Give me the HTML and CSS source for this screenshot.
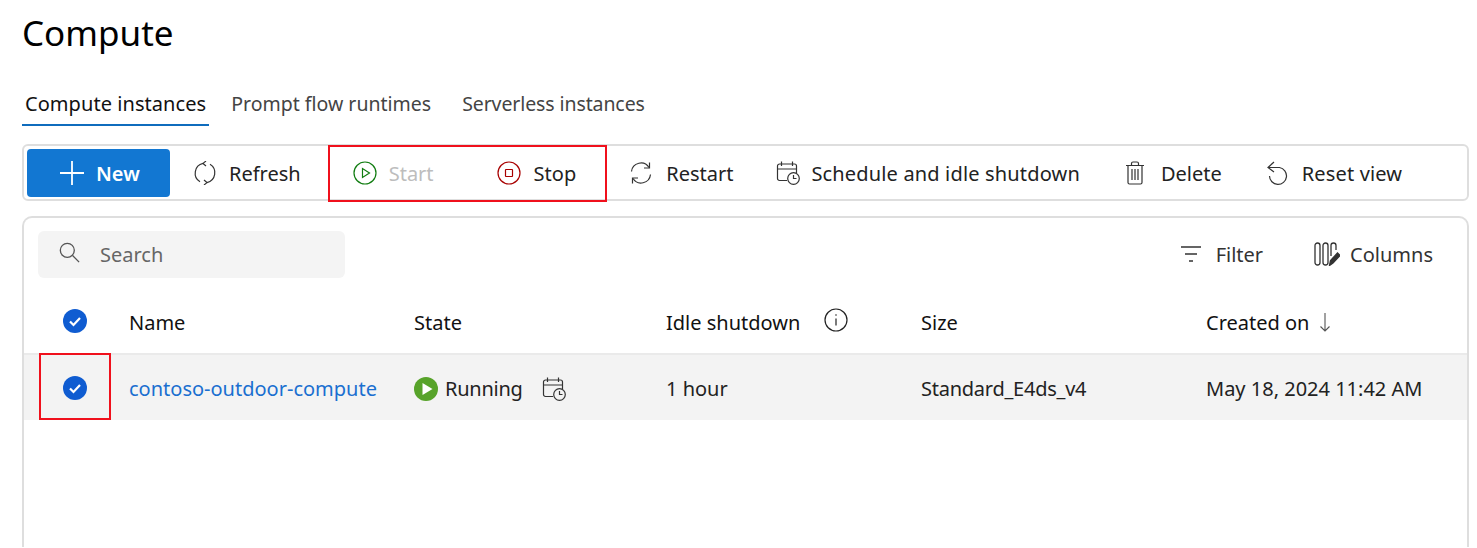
FILE: index.html
```html
<!DOCTYPE html>
<html lang="en">
<head>
<meta charset="utf-8">
<title>Compute</title>
<link rel="stylesheet" href="styles.css">
</head>
<body>
<main class="page">
  <h1 class="title">Compute</h1>
  <nav class="tabs">
    <a class="tab tab-active">Compute instances</a>
    <a class="tab tab-prompt">Prompt flow runtimes</a>
    <a class="tab tab-serverless">Serverless instances</a>
  </nav>

  <div class="toolbar">
    <button class="new-btn">
      <svg class="ico-plus" viewBox="0 0 24 24"><path d="M12 0v24M0 12h24" stroke="#fff" stroke-width="1.8" fill="none"/></svg>
      <span>New</span>
    </button>
    <div class="tool t-refresh">
      <svg class="ico" viewBox="0 0 24 24" fill="none" stroke="#333" stroke-width="1.2"><path d="M10 2.400A10 10 0 0 0 7 20.700"/><path d="M14 21.600A10 10 0 0 0 17 3.300"/><path d="M13 0 10 2.400l3 2.600M11 24l3-2.400-3-2.600"/></svg>
      <span>Refresh</span>
    </div>
    <div class="tool t-start">
      <svg class="ico" viewBox="0 0 24 24" fill="none" stroke="#107c10" stroke-width="1.2"><circle cx="12" cy="12" r="11"/><path d="M9.500 7.500v9l7-4.500z"/></svg>
      <span class="disabled">Start</span>
    </div>
    <div class="tool t-stop">
      <svg class="ico" viewBox="0 0 24 24" fill="none" stroke="#a80000" stroke-width="1.2"><circle cx="12" cy="12" r="11"/><rect x="8.500" y="8.500" width="7" height="7" rx=".5"/></svg>
      <span>Stop</span>
    </div>
    <div class="tool t-restart">
      <svg class="ico" viewBox="0 0 24 24" fill="none" stroke="#333" stroke-width="1.2"><path d="M2.500 10.500A9.500 9.500 0 0 1 20 6.500"/><path d="M21.500 13.500A9.500 9.500 0 0 1 4 17.500"/><path d="M20.500 1.500v5.500h-5.500M3.500 22.500V17h5.500"/></svg>
      <span>Restart</span>
    </div>
    <div class="tool t-schedule">
      <svg class="ico" viewBox="0 0 24 24" fill="none" stroke="#333" stroke-width="1.2"><path d="M11 19.500H3.500a2 2 0 0 1-2-2V5a2 2 0 0 1 2-2h15a2 2 0 0 1 2 2v7M1.500 8h19M5.500 .5v4.500M16.500 .5v4.500"/><circle cx="17.500" cy="17.500" r="5.800"/><path d="M17.500 14v3.500h3"/></svg>
      <span class="wide">Schedule and idle shutdown</span>
    </div>
    <div class="tool t-delete">
      <svg class="ico ico-trash" viewBox="0 0 20 24" fill="none" stroke="#333" stroke-width="1.2"><path d="M1 4.500h18M6.500 4.500V2.500a1.500 1.500 0 0 1 1.500-1.500h4a1.500 1.500 0 0 1 1.500 1.500v2M3 4.500v17a1.500 1.500 0 0 0 1.500 1.500h11a1.500 1.500 0 0 0 1.500-1.500v-17M7 8v11M10 8v11M13 8v11"/></svg>
      <span>Delete</span>
    </div>
    <div class="tool t-reset">
      <svg class="ico" viewBox="0 0 24 24" fill="none" stroke="#333" stroke-width="1.2"><path d="M3 6.500h10.500a8.500 8.500 0 1 1-10 8.500"/><path d="M8 1 2 6.500l6 4.500"/></svg>
      <span class="wide">Reset view</span>
    </div>
  </div>

  <section class="card">
    <div class="card-top">
      <div class="search">
        <svg class="ico-search" viewBox="0 0 24 24" fill="none" stroke="#555" stroke-width="1.500"><circle cx="9.500" cy="9.500" r="8"/><path d="M15.500 15.500 23 23"/></svg>
        <span>Search</span>
      </div>
      <div class="card-actions">
        <div class="action">
          <svg class="ico-filter" viewBox="0 0 20 16" fill="none" stroke="#333" stroke-width="1.500"><path d="M0 1h20M4 8h12M8 15h4"/></svg>
          <span>Filter</span>
        </div>
        <div class="action action-columns">
          <svg class="ico-columns" viewBox="0 0 26 24" fill="none" stroke="#333" stroke-width="1.300"><rect x="1" y="1" width="5" height="22" rx="2.500"/><rect x="9" y="1" width="5" height="22" rx="2.500"/><path d="M17 14V3.500a2.500 2.500 0 0 1 5 0V8"/><path d="M15.500 23.500l1-5 7-7.500 2.500 2.500-7 7.500z" fill="#333" stroke="#333"/></svg>
          <span>Columns</span>
        </div>
      </div>
    </div>

    <div class="grid head">
      <div class="check-cell"><svg class="check" viewBox="0 0 24 24"><circle cx="12" cy="12" r="12" fill="#0f5cd1"/><path d="M7 12.500l3.500 3.500L17 9" fill="none" stroke="#fff" stroke-width="2.200"/></svg></div>
      <div>Name</div>
      <div>State</div>
      <div class="idle">Idle shutdown
        <svg class="ico-info" viewBox="0 0 24 24" fill="none" stroke="#222" stroke-width="1.200"><circle cx="12" cy="12" r="11"/><path d="M12 10.500v7"/><circle cx="12" cy="7" r=".8" fill="#222" stroke="none"/></svg>
      </div>
      <div>Size</div>
      <div class="created">Created on
        <svg class="ico-arrow" viewBox="0 0 10 19" fill="none" stroke="#555" stroke-width="1.100"><path d="M5 0v18M.5 13.500 5 18l4.500-4.500"/></svg>
      </div>
    </div>

    <div class="grid row">
      <div class="check-cell"><svg class="check" viewBox="0 0 24 24"><circle cx="12" cy="12" r="12" fill="#0f5cd1"/><path d="M7 12.500l3.500 3.500L17 9" fill="none" stroke="#fff" stroke-width="2.200"/></svg></div>
      <div><a class="link">contoso-outdoor-compute</a></div>
      <div class="state">
        <svg class="ico-run" viewBox="0 0 24 24"><circle cx="12" cy="12" r="12" fill="#57a32a"/><path d="M8.500 6v12l10-6z" fill="#fff"/></svg>
        <span class="running">Running</span>
        <svg class="ico-sched" viewBox="0 0 24 24" fill="none" stroke="#333" stroke-width="1.200"><path d="M11 19.500H3.500a2 2 0 0 1-2-2V5a2 2 0 0 1 2-2h15a2 2 0 0 1 2 2v7M1.500 8h19M5.500 .5v4.500M16.500 .5v4.500"/><circle cx="17.500" cy="17.500" r="5.800"/><path d="M17.500 14v3.500h3"/></svg>
      </div>
      <div>1 hour</div>
      <div class="size">Standard_E4ds_v4</div>
      <div>May 18, 2024 11:42 AM</div>
    </div>
  </section>

  <div class="mark mark-actions"></div>
  <div class="mark mark-row"></div>
</main>
</body>
</html>
```
FILE: styles.css
```css
html, body { margin: 0; padding: 0; background: #fff; }
body {
  width: 1477px;
  height: 548px;
  overflow: hidden;
  font-family: "Noto Sans", "Open Sans", sans-serif;
  font-size: 20px;
  color: #1a1a1a;
}
.page { position: relative; height: 548px; padding: 0 8px 0 22px; box-sizing: border-box; overflow: hidden; }
.title {
  margin: 0;
  padding-top: 8px;
  height: 90px;
  box-sizing: border-box;
  font-size: 35px;
  line-height: 50px;
  font-weight: 400;
  color: #000;
}
.tabs { display: flex; height: 36px; }
.tab { line-height: 28px; padding: 0 3px; color: #444; font-size: 19.500px; white-space: nowrap; }
.tab-active { color: #111; font-size: 20px; letter-spacing: .06px; border-bottom: 2px solid #0f6cbd; height: 34px; }
.tab-prompt { margin-left: 19px; }
.tab-serverless { margin-left: 25px; letter-spacing: -.1px; }

.toolbar {
  margin-top: 18px;
  height: 57px;
  box-sizing: border-box;
  border: 2px solid #dedede;
  border-radius: 6px;
  display: flex;
  align-items: center;
  padding-left: 3px;
}
.new-btn {
  width: 143px;
  height: 48px;
  border: 0;
  border-radius: 4px;
  background: #1277d2;
  color: #fff;
  font: 600 20px "Noto Sans", sans-serif;
  display: flex;
  align-items: center;
  padding: 0 0 0 33px;
  gap: 12px;
}
.new-btn span, .tool span { padding-top: 2px; }
.ico-plus { width: 24px; height: 24px; }
.tool { display: flex; align-items: center; gap: 12px; white-space: nowrap; color: #222; }
.ico { width: 24px; height: 24px; flex: none; }
.ico-trash { width: 20px; }
.disabled { color: #bdbdbd; }
.wide { letter-spacing: .16px; }
.t-refresh { margin-left: 23px; }
.t-start { margin-left: 52px; }
.t-stop { margin-left: 63px; gap: 13px; }
.t-restart { margin-left: 53px; gap: 13px; }
.t-schedule { margin-left: 43px; gap: 11px; }
.t-delete { margin-left: 45px; gap: 16px; }
.t-reset { margin-left: 44px; }

.card {
  margin-top: 15px;
  height: 331px;
  box-sizing: border-box;
  border: 2px solid #dedede;
  border-bottom: 0;
  border-radius: 10px 10px 0 0;
}
.card-top {
  display: flex;
  justify-content: space-between;
  align-items: center;
  padding: 12px 34px 0 14px;
  height: 60px;
  box-sizing: border-box;
}
.search {
  width: 307px;
  height: 47px;
  border-radius: 6px;
  background: #f4f4f4;
  display: flex;
  align-items: center;
  padding-left: 21px;
  box-sizing: border-box;
  gap: 20px;
  color: #666;
}
.ico-search { width: 21px; height: 21px; margin-top: -3px; }
.card-actions { display: flex; align-items: center; gap: 51px; }
.action { display: flex; align-items: center; gap: 15px; color: #333; }
.action-columns { gap: 10px; }
.ico-filter { width: 20px; height: 16px; }
.ico-columns { width: 26px; height: 24px; }

.grid {
  display: grid;
  grid-template-columns: 105px 285px 252px 255px 285px 1fr;
  align-items: center;
  white-space: nowrap;
}
.grid > div:not(.check-cell) { padding-top: 2px; }
.head { height: 75px; padding-top: 12px; box-sizing: border-box; color: #111; }
.head .check-cell { padding-bottom: 2px; }
.row {
  height: 67px;
  background: #f3f3f3;
  border-top: 2px solid #eaeaea;
  box-sizing: border-box;
  color: #222;
}
.check-cell { display: flex; padding-left: 39px; }
.check { width: 24px; height: 24px; display: block; }
.idle, .created { display: flex; align-items: center; }
.ico-info { width: 24px; height: 24px; margin-left: 24px; margin-top: -6px; }
.ico-arrow { width: 10px; height: 19px; margin-left: 11px; }
.link { color: #1a6fd0; }
.state { display: flex; align-items: center; }
.ico-run { width: 24px; height: 24px; margin-right: 7px; }
.running { letter-spacing: -.25px; }
.size { letter-spacing: -.25px; }
.ico-sched { width: 24px; height: 24px; margin-left: 19px; }

.mark { position: absolute; border: 2px solid #f0101c; box-sizing: border-box; pointer-events: none; }
.mark-actions { left: 328px; top: 145px; width: 279px; height: 57px; }
.mark-row { left: 39px; top: 353px; width: 72px; height: 67px; }
```
